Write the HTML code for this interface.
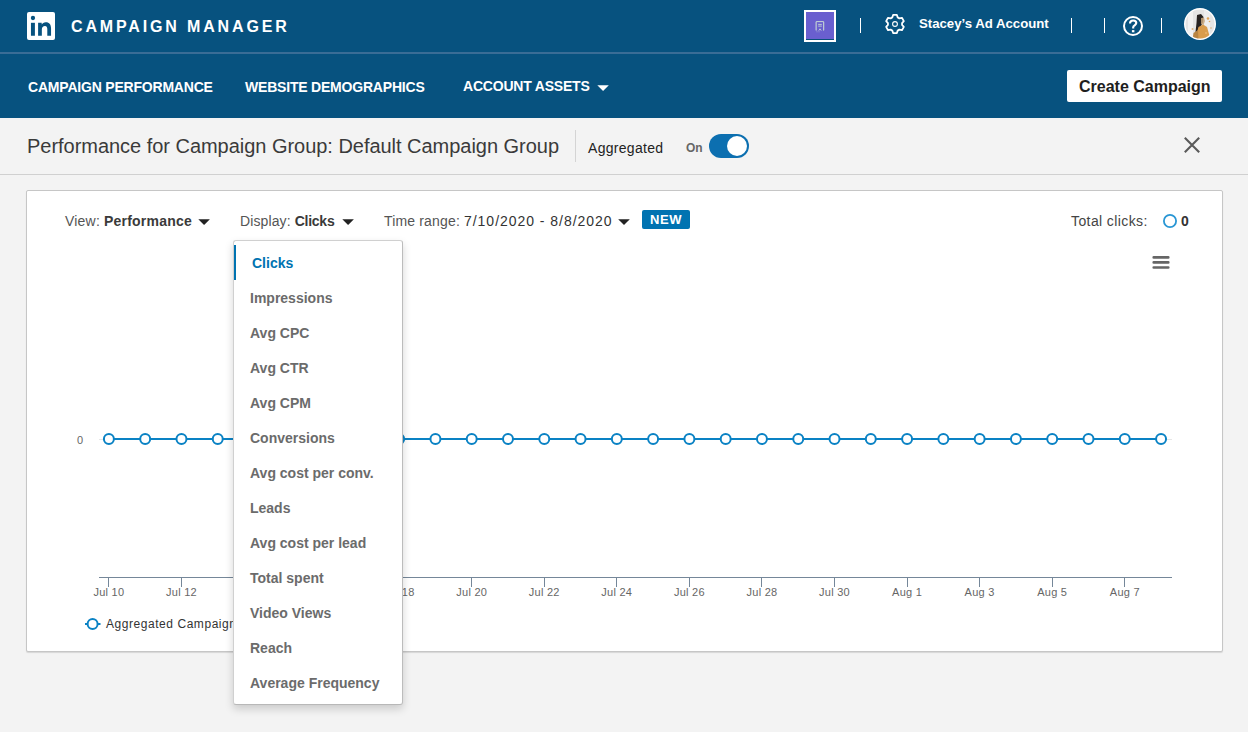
<!DOCTYPE html>
<html><head><meta charset="utf-8">
<style>
*{box-sizing:border-box;margin:0;padding:0}
html,body{width:1248px;height:732px;overflow:hidden;background:#f3f3f3;font-family:"Liberation Sans",sans-serif;position:relative}
.abs{position:absolute}
.w{color:#fff}
.navi{position:absolute;font-size:14px;letter-spacing:-.2px;font-weight:bold;color:#fff;white-space:nowrap;line-height:16px}
.vsep{position:absolute;width:1px;height:15px;background:#fff;top:18px}
.t14{position:absolute;font-size:14px;white-space:nowrap;line-height:16px}
.caret{position:absolute;width:0;height:0;border-left:5.75px solid transparent;border-right:5.75px solid transparent;border-top:5.75px solid #222}
.di{position:absolute;left:16px;font-size:14px;font-weight:bold;color:#6b6b6b;white-space:nowrap;line-height:16px}
</style></head><body>
<div class="abs" style="left:0;top:0;width:1248px;height:118px;background:#07527f"></div>
<div class="abs" style="left:0;top:52px;width:1248px;height:2px;background:#3a6d96"></div>

<!-- logo -->
<svg class="abs" style="left:27px;top:12px" width="28" height="28" viewBox="0 0 28 28">
  <rect x="0" y="0" width="28" height="28" rx="2" fill="#fff"/>
  <circle cx="5.95" cy="6" r="2.15" fill="#07527f"/>
  <rect x="3.95" y="10.8" width="3.95" height="12.95" fill="#07527f"/>
  <path d="M11.1 10.8H14.7V12.6C15.4 11.3 16.8 10.2 18.8 10.2C22.5 10.2 24.05 12.5 24.05 16.5V23.75H20.3V17.3C20.3 15.4 19.8 14 18 14C16 14 14.85 15.3 14.85 17.4V23.75H11.1Z" fill="#07527f"/>
</svg>
<div class="abs w" style="left:71px;top:18px;font-size:16px;font-weight:bold;letter-spacing:2.85px;white-space:nowrap;line-height:18px">CAMPAIGN MANAGER</div>

<!-- right header -->
<div class="abs" style="left:804px;top:10px;width:32px;height:32px;background:#fff"></div>
<div class="abs" style="left:806px;top:12px;width:28px;height:27px;background:#6a5fcf"></div>
<div class="abs" style="left:806px;top:39px;width:28px;height:1px;background:#0b4f7c"></div>
<svg class="abs" style="left:812px;top:18px" width="16" height="16" viewBox="0 0 16 16">
  <path d="M4.2 12.6V3.6H11.6V12.6" fill="none" stroke="#c5d6d6" stroke-width="1"/>
  <path d="M6.2 6.4H9.8M6.2 8.1H9.8" stroke="#c5d6d6" stroke-width=".9"/>
  <path d="M6.8 12.6L8 10.8L9.2 12.6" fill="none" stroke="#c5d6d6" stroke-width=".9"/>
  <path d="M3.2 5H4.2M3.2 7H4.2M3.2 9H4.2M3.2 11H4.2M11.6 5H12.6M11.6 7H12.6M11.6 9H12.6M11.6 11H12.6M4.5 13.8H5.5M6.5 13.8H7.5" stroke="#b8c8d0" stroke-width=".6"/>
</svg>
<div class="vsep" style="left:860px"></div>
<svg class="abs" style="left:884px;top:13px" width="22" height="22" viewBox="0 0 22 22">
  <path fill="none" stroke="#fff" stroke-width="1.8" stroke-linejoin="round" d="M8.30 4.40 L9.10 1.90 L12.90 1.90 L13.70 4.40 L15.37 5.36 L17.93 4.80 L19.83 8.10 L18.07 10.04 L18.07 11.96 L19.83 13.90 L17.93 17.20 L15.37 16.64 L13.70 17.60 L12.90 20.10 L9.10 20.10 L8.30 17.60 L6.63 16.64 L4.07 17.20 L2.17 13.90 L3.93 11.96 L3.93 10.04 L2.17 8.10 L4.07 4.80 L6.63 5.36Z"/>
  <circle cx="11" cy="11" r="2.4" fill="none" stroke="#fff" stroke-width="1.1"/>
</svg>
<div class="abs w" style="left:919px;top:16px;font-size:13.2px;font-weight:bold;white-space:nowrap;line-height:16px">Stacey’s Ad Account</div>
<div class="vsep" style="left:1071px"></div>
<div class="vsep" style="left:1104px"></div>
<svg class="abs" style="left:1118px;top:10px" width="30" height="30" viewBox="0 0 30 30">
  <circle cx="15" cy="16" r="9" fill="none" stroke="#fff" stroke-width="2"/>
  <path d="M12 13.4C12 11.5 13.3 10.5 15.2 10.5C17 10.5 18.3 11.6 18.3 13.1C18.3 15.2 15.2 15.4 15.2 17.2V18.4" fill="none" stroke="#fff" stroke-width="2.1"/>
  <rect x="13.9" y="20.1" width="2.5" height="2.2" fill="#fff"/>
</svg>
<div class="vsep" style="left:1161px"></div>
<svg class="abs" style="left:1184px;top:8px" width="32" height="32" viewBox="0 0 32 32">
  <defs><clipPath id="av"><circle cx="16" cy="16" r="14.6"/></clipPath></defs>
  <circle cx="16" cy="16" r="16" fill="#fff"/>
  <g clip-path="url(#av)">
    <rect width="32" height="32" fill="#e4e4e4"/>
    <rect x="4" y="0" width="5" height="32" fill="#f2f2f2"/>
    <rect x="20" y="0" width="6" height="32" fill="#eeeeee"/>
    <path d="M13 7L17 6L19.5 9L19 14L16.5 19L15.5 27L13 29L11.5 24L12.5 15Z" fill="#262221"/>
    <path d="M17 10L20 9.5L21 13L19.5 17L17 16Z" fill="#c9a77c" opacity=".85"/>
    <path d="M14.5 19L19 16.5L23 19L25 26L26 32H12L12.5 26Z" fill="#d99c4c"/>
    <path d="M9.5 25L14 22L14.5 32H8.5Z" fill="#b98542"/>
    <circle cx="24" cy="10.5" r="1.3" fill="#e0a458"/>
    <circle cx="25.5" cy="13.5" r=".8" fill="#e0a458"/>
    <circle cx="8.5" cy="21" r="1" fill="#d9a45c" opacity=".8"/>
    <circle cx="27" cy="20" r=".7" fill="#d9a45c"/>
    <circle cx="22" cy="25" r="1" fill="#eab36a"/>
  </g>
</svg>

<!-- nav -->
<div class="navi" style="left:28px;top:79px">CAMPAIGN PERFORMANCE</div>
<div class="navi" style="left:245px;top:79px">WEBSITE DEMOGRAPHICS</div>
<div class="navi" style="left:463px;top:78px">ACCOUNT ASSETS</div>
<svg class="abs" style="left:0;top:0" width="1248" height="300"><path d="M597.3 85.2H608.8L603.05 90.9Z" fill="#fff"/></svg>
<div class="abs" style="left:1067px;top:70px;width:155px;height:32px;background:#fff;border-radius:2px"></div>
<div class="abs" style="left:1079px;top:78px;font-size:16px;font-weight:bold;color:#1e1e1e;white-space:nowrap;line-height:18px">Create Campaign</div>

<!-- title row -->
<div class="abs" style="left:27px;top:135px;font-size:20px;letter-spacing:-.03px;color:#3a3a3a;white-space:nowrap;line-height:23px">Performance for Campaign Group: Default Campaign Group</div>
<div class="abs" style="left:575px;top:130px;width:1px;height:32px;background:#d4d4d4"></div>
<div class="t14" style="left:588px;top:140px;color:#222;letter-spacing:.3px">Aggregated</div>
<div class="abs" style="left:686px;top:141px;font-size:12px;font-weight:bold;color:#666;line-height:14px">On</div>
<div class="abs" style="left:709px;top:134px;width:40px;height:24px;border-radius:12px;background:#0c6fb0"></div>
<div class="abs" style="left:727px;top:136px;width:20px;height:20px;border-radius:50%;background:#fff"></div>
<svg class="abs" style="left:1176px;top:130px" width="30" height="30" viewBox="0 0 30 30">
  <path d="M8.8 7.8L23.2 22.2M23.2 7.8L8.8 22.2" stroke="#5a5a5a" stroke-width="2.1"/>
</svg>
<div class="abs" style="left:0;top:174px;width:1248px;height:1px;background:#d0d0d0"></div>

<!-- card -->
<div class="abs" style="left:26px;top:190px;width:1197px;height:462px;background:#fff;border:1px solid #c6c6c6;border-radius:2px;box-shadow:0 1px 1px rgba(0,0,0,.12)"></div>
<div class="t14" style="left:65px;top:213px;color:#555"><span style="letter-spacing:.2px">View: </span><b style="color:#3a3a3a;letter-spacing:.2px">Performance</b></div>
<svg class="abs" style="left:0;top:0" width="1248" height="300"><path d="M198.3 219.2H209.9L204.10 225.1Z" fill="#222"/></svg>
<div class="t14" style="left:240px;top:213px;color:#555"><span style="letter-spacing:.12px">Display: </span><b style="color:#3a3a3a;letter-spacing:-.27px">Clicks</b></div>
<svg class="abs" style="left:0;top:0" width="1248" height="300"><path d="M342.3 219.2H353.9L348.10 225.1Z" fill="#222"/></svg>
<div class="t14" style="left:384px;top:213px;color:#555"><span style="letter-spacing:.16px">Time range: </span><span style="color:#333;letter-spacing:.97px">7/10/2020 - 8/8/2020</span></div>
<svg class="abs" style="left:0;top:0" width="1248" height="300"><path d="M618.2 219.2H629.8L624.00 225.1Z" fill="#222"/></svg>
<div class="abs" style="left:642px;top:210px;width:48px;height:19px;background:#0073b1;border-radius:2px"></div>
<div class="abs" style="left:650px;top:212px;font-size:13px;font-weight:bold;color:#fff;letter-spacing:.6px;line-height:15px">NEW</div>
<div class="t14" style="left:1071px;top:213px;color:#444;letter-spacing:.4px">Total clicks:</div>
<svg class="abs" style="left:1160px;top:211px" width="20" height="20" viewBox="0 0 20 20">
  <circle cx="10" cy="10" r="6.1" fill="none" stroke="#2996d4" stroke-width="1.8"/>
</svg>
<div class="abs" style="left:1181px;top:213px;font-size:14px;font-weight:bold;color:#333;line-height:16px">0</div>
<svg class="abs" style="left:1150px;top:252px" width="22" height="20" viewBox="0 0 22 20">
  <path d="M3.7 5.4H18.3M3.7 10.4H18.3M3.7 15.5H18.3" stroke="#666" stroke-width="2.6" stroke-linecap="round"/>
</svg>

<!-- chart -->
<svg class="abs" style="left:0;top:0" width="1248" height="732">
<path d="M99 439.5H1172" stroke="#e6e6e6" stroke-width="1"/>
<path d="M108.9 439H1161.05" stroke="#0a82c4" stroke-width="2"/>
<circle cx="108.90" cy="439" r="5" fill="#fff" stroke="#0a82c4" stroke-width="2"/>
<circle cx="145.18" cy="439" r="5" fill="#fff" stroke="#0a82c4" stroke-width="2"/>
<circle cx="181.46" cy="439" r="5" fill="#fff" stroke="#0a82c4" stroke-width="2"/>
<circle cx="217.74" cy="439" r="5" fill="#fff" stroke="#0a82c4" stroke-width="2"/>
<circle cx="254.02" cy="439" r="5" fill="#fff" stroke="#0a82c4" stroke-width="2"/>
<circle cx="290.31" cy="439" r="5" fill="#fff" stroke="#0a82c4" stroke-width="2"/>
<circle cx="326.59" cy="439" r="5" fill="#fff" stroke="#0a82c4" stroke-width="2"/>
<circle cx="362.87" cy="439" r="5" fill="#fff" stroke="#0a82c4" stroke-width="2"/>
<circle cx="399.15" cy="439" r="5" fill="#fff" stroke="#0a82c4" stroke-width="2"/>
<circle cx="435.43" cy="439" r="5" fill="#fff" stroke="#0a82c4" stroke-width="2"/>
<circle cx="471.71" cy="439" r="5" fill="#fff" stroke="#0a82c4" stroke-width="2"/>
<circle cx="507.99" cy="439" r="5" fill="#fff" stroke="#0a82c4" stroke-width="2"/>
<circle cx="544.27" cy="439" r="5" fill="#fff" stroke="#0a82c4" stroke-width="2"/>
<circle cx="580.55" cy="439" r="5" fill="#fff" stroke="#0a82c4" stroke-width="2"/>
<circle cx="616.83" cy="439" r="5" fill="#fff" stroke="#0a82c4" stroke-width="2"/>
<circle cx="653.12" cy="439" r="5" fill="#fff" stroke="#0a82c4" stroke-width="2"/>
<circle cx="689.40" cy="439" r="5" fill="#fff" stroke="#0a82c4" stroke-width="2"/>
<circle cx="725.68" cy="439" r="5" fill="#fff" stroke="#0a82c4" stroke-width="2"/>
<circle cx="761.96" cy="439" r="5" fill="#fff" stroke="#0a82c4" stroke-width="2"/>
<circle cx="798.24" cy="439" r="5" fill="#fff" stroke="#0a82c4" stroke-width="2"/>
<circle cx="834.52" cy="439" r="5" fill="#fff" stroke="#0a82c4" stroke-width="2"/>
<circle cx="870.80" cy="439" r="5" fill="#fff" stroke="#0a82c4" stroke-width="2"/>
<circle cx="907.08" cy="439" r="5" fill="#fff" stroke="#0a82c4" stroke-width="2"/>
<circle cx="943.36" cy="439" r="5" fill="#fff" stroke="#0a82c4" stroke-width="2"/>
<circle cx="979.64" cy="439" r="5" fill="#fff" stroke="#0a82c4" stroke-width="2"/>
<circle cx="1015.93" cy="439" r="5" fill="#fff" stroke="#0a82c4" stroke-width="2"/>
<circle cx="1052.21" cy="439" r="5" fill="#fff" stroke="#0a82c4" stroke-width="2"/>
<circle cx="1088.49" cy="439" r="5" fill="#fff" stroke="#0a82c4" stroke-width="2"/>
<circle cx="1124.77" cy="439" r="5" fill="#fff" stroke="#0a82c4" stroke-width="2"/>
<circle cx="1161.05" cy="439" r="5" fill="#fff" stroke="#0a82c4" stroke-width="2"/>
<path d="M99 577.5H1172" stroke="#758799" stroke-width="1"/>
<path d="M108.5 577V587" stroke="#758799" stroke-width="1"/>
<text x="108.9" y="596" text-anchor="middle" font-size="11" letter-spacing=".25" fill="#666" font-family="Liberation Sans">Jul 10</text>
<path d="M181.5 577V587" stroke="#758799" stroke-width="1"/>
<text x="181.5" y="596" text-anchor="middle" font-size="11" letter-spacing=".25" fill="#666" font-family="Liberation Sans">Jul 12</text>
<path d="M254.5 577V587" stroke="#758799" stroke-width="1"/>
<text x="254.0" y="596" text-anchor="middle" font-size="11" letter-spacing=".25" fill="#666" font-family="Liberation Sans">Jul 14</text>
<path d="M326.5 577V587" stroke="#758799" stroke-width="1"/>
<text x="326.6" y="596" text-anchor="middle" font-size="11" letter-spacing=".25" fill="#666" font-family="Liberation Sans">Jul 16</text>
<path d="M399.5 577V587" stroke="#758799" stroke-width="1"/>
<text x="399.1" y="596" text-anchor="middle" font-size="11" letter-spacing=".25" fill="#666" font-family="Liberation Sans">Jul 18</text>
<path d="M471.5 577V587" stroke="#758799" stroke-width="1"/>
<text x="471.7" y="596" text-anchor="middle" font-size="11" letter-spacing=".25" fill="#666" font-family="Liberation Sans">Jul 20</text>
<path d="M544.5 577V587" stroke="#758799" stroke-width="1"/>
<text x="544.3" y="596" text-anchor="middle" font-size="11" letter-spacing=".25" fill="#666" font-family="Liberation Sans">Jul 22</text>
<path d="M616.5 577V587" stroke="#758799" stroke-width="1"/>
<text x="616.8" y="596" text-anchor="middle" font-size="11" letter-spacing=".25" fill="#666" font-family="Liberation Sans">Jul 24</text>
<path d="M689.5 577V587" stroke="#758799" stroke-width="1"/>
<text x="689.4" y="596" text-anchor="middle" font-size="11" letter-spacing=".25" fill="#666" font-family="Liberation Sans">Jul 26</text>
<path d="M761.5 577V587" stroke="#758799" stroke-width="1"/>
<text x="762.0" y="596" text-anchor="middle" font-size="11" letter-spacing=".25" fill="#666" font-family="Liberation Sans">Jul 28</text>
<path d="M834.5 577V587" stroke="#758799" stroke-width="1"/>
<text x="834.5" y="596" text-anchor="middle" font-size="11" letter-spacing=".25" fill="#666" font-family="Liberation Sans">Jul 30</text>
<path d="M907.5 577V587" stroke="#758799" stroke-width="1"/>
<text x="907.1" y="596" text-anchor="middle" font-size="11" letter-spacing=".25" fill="#666" font-family="Liberation Sans">Aug 1</text>
<path d="M979.5 577V587" stroke="#758799" stroke-width="1"/>
<text x="979.6" y="596" text-anchor="middle" font-size="11" letter-spacing=".25" fill="#666" font-family="Liberation Sans">Aug 3</text>
<path d="M1052.5 577V587" stroke="#758799" stroke-width="1"/>
<text x="1052.2" y="596" text-anchor="middle" font-size="11" letter-spacing=".25" fill="#666" font-family="Liberation Sans">Aug 5</text>
<path d="M1124.5 577V587" stroke="#758799" stroke-width="1"/>
<text x="1124.8" y="596" text-anchor="middle" font-size="11" letter-spacing=".25" fill="#666" font-family="Liberation Sans">Aug 7</text>
<path d="M85 624H100.5" stroke="#0a82c4" stroke-width="2"/>
<circle cx="92.6" cy="624" r="5" fill="#fff" stroke="#0a82c4" stroke-width="2"/>
<text x="106" y="628" font-size="12" letter-spacing=".55" fill="#333" font-family="Liberation Sans">Aggregated Campaign Group</text>
</svg>
<div class="abs" style="left:77px;top:434px;font-size:11px;color:#666;line-height:13px">0</div>

<!-- dropdown -->
<div class="abs" style="left:233px;top:240px;width:170px;height:465px;background:#fff;border:1px solid #d0d0d0;border-bottom-color:#b8b8b8;border-right-color:#bcbcbc;border-radius:3px;box-shadow:0 4px 9px rgba(0,0,0,.17)">
  <div class="abs" style="left:0;top:4px;width:2px;height:35px;background:#0073b1"></div>
  <div class="di" style="top:14px;left:18px;color:#0073b1">Clicks</div>
  <div class="di" style="top:49px">Impressions</div>
  <div class="di" style="top:84px">Avg CPC</div>
  <div class="di" style="top:119px">Avg CTR</div>
  <div class="di" style="top:154px">Avg CPM</div>
  <div class="di" style="top:189px">Conversions</div>
  <div class="di" style="top:224px">Avg cost per conv.</div>
  <div class="di" style="top:259px">Leads</div>
  <div class="di" style="top:294px">Avg cost per lead</div>
  <div class="di" style="top:329px">Total spent</div>
  <div class="di" style="top:364px">Video Views</div>
  <div class="di" style="top:399px">Reach</div>
  <div class="di" style="top:434px">Average Frequency</div>
</div>
</body></html>
